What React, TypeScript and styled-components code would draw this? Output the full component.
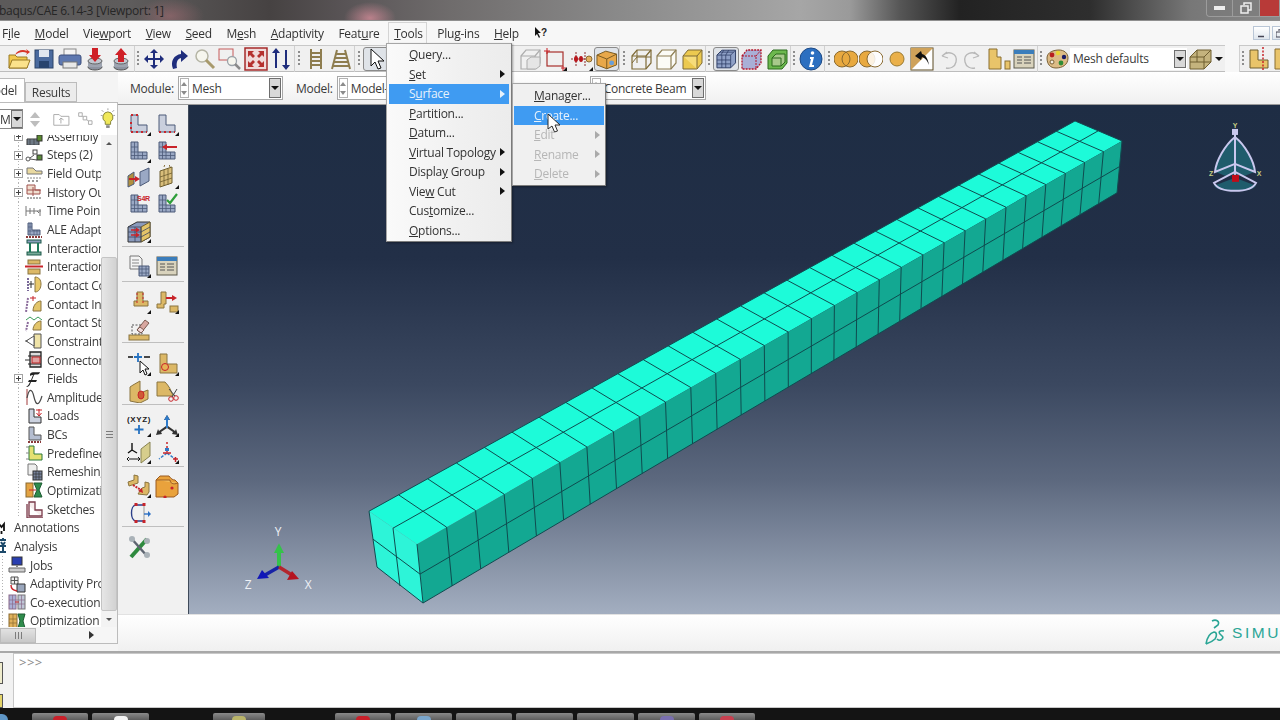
import type { ReactNode } from "react";
import styled, { createGlobalStyle } from "styled-components";

const GlobalStyle = createGlobalStyle`
  html, body {
    margin: 0;
    padding: 0;
    background: #f2f2f2;
    overflow: hidden;
  }
  * { box-sizing: border-box; }
`;

const Page = styled.div`
  position: relative;
  width: 1280px;
  height: 720px;
  display: flex;
  flex-direction: column;
  overflow: hidden;
  font-family: "Open Sans", "Noto Sans", sans-serif;
  font-size: 12px;
  letter-spacing: -0.25px;
  color: #3a3a3a;
  filter: blur(0.35px);
`;

const TitleBar = styled.div`
  height: 21px;
  flex: none;
  display: flex;
  align-items: center;
  justify-content: space-between;
  background:
    radial-gradient(26px 16px at 370px 18px, rgba(235, 150, 165, 0.65), transparent),
    radial-gradient(34px 18px at 170px 16px, rgba(200, 120, 130, 0.4), transparent),
    linear-gradient(90deg, #5c5a5a 0, #5e5c5c 130px, #464242 270px, #5a5557 350px, #6f6c6c 450px, #8a8a8a 620px, #a6a6a6 800px, #9a9a9a 850px, #565656 900px, #222 960px, #2e2e2e 1090px, #777 1190px, #8a8a8a 1280px);
  border-bottom: 1px solid #8f8f8f;
`;

const TitleText = styled.span`
  margin-left: -1px;
  color: #262626;
  white-space: nowrap;
`;

const WindowButtons = styled.div`
  display: flex;
  align-self: flex-start;
  height: 17px;
  border: 1px solid #9c9c9c;
  border-top: none;
  border-right: none;
  border-radius: 0 0 0 4px;
  overflow: hidden;
`;

const WindowButton = styled.div<{ $w: number; $bg: string }>`
  width: ${(p) => p.$w}px;
  display: flex;
  align-items: center;
  justify-content: center;
  background: ${(p) => p.$bg};
  border-right: 1px solid #9c9c9c;
`;

const MenuBar = styled.div`
  height: 24px;
  flex: none;
  display: flex;
  align-items: center;
  gap: 14.6px;
  padding-left: 2px;
  background: #f7f7f7;
`;

const MenuTitle = styled.span<{ $open?: boolean }>`
  white-space: nowrap;
  position: relative;
  color: #333;
  ${(p) =>
    p.$open &&
    `
    &::before {
      content: "";
      position: absolute;
      left: -6px;
      right: -4px;
      top: -3px;
      bottom: -5px;
      border: 1px solid #d4d4d4;
      border-bottom: none;
    }
  `}
`;

const MdiButtons = styled.div`
  margin-left: auto;
  margin-right: -9px;
  display: flex;
  gap: 2px;
`;

const MdiButton = styled.div`
  width: 17px;
  height: 14px;
  border: 1px solid #b9c6d6;
  background: linear-gradient(#fff, #dfe6ee);
  display: flex;
  align-items: center;
  justify-content: center;
`;

const ToolRow = styled.div`
  height: 27px;
  flex: none;
  display: flex;
  align-items: center;
  padding-left: 6px;
  background: #f0f0f0;
  border-top: 1px solid #c8c8c8;
  border-bottom: 1px solid #bdbdbd;
`;

const Slot = styled.div<{ $pressed?: boolean; $w?: number }>`
  width: ${(p) => p.$w ?? 25.5}px;
  height: 24px;
  flex: none;
  display: flex;
  align-items: center;
  justify-content: center;
  ${(p) =>
    p.$pressed &&
    `
    background: #dfe3e8;
    border: 1px solid #8a8a8a;
    border-radius: 3px;
  `}
`;

const Grip = styled.div<{ $w: number }>`
  width: ${(p) => p.$w}px;
  height: 26px;
  flex: none;
  display: flex;
  align-items: center;
  justify-content: center;
  border-left: 1px solid #d0d0d0;
  &::after {
    content: "";
    width: 2px;
    height: 15px;
    background: repeating-linear-gradient(#8d8d8d 0 2px, transparent 2px 4px);
  }
`;

const RowGap = styled.div<{ $w: number }>`
  width: ${(p) => p.$w}px;
  flex: none;
`;

const RowBreak = styled.div<{ $w: number }>`
  width: ${(p) => p.$w}px;
  height: 27px;
  flex: none;
  background: #f7f7f7;
`;

const PresetCombo = styled.div`
  width: 117px;
  height: 22px;
  flex: none;
  display: flex;
  align-items: center;
  justify-content: space-between;
  padding: 0 1px 0 3px;
  background: #fff;
`;

const DropButton = styled.div<{ $h?: number }>`
  width: 12px;
  height: ${(p) => p.$h ?? 18}px;
  flex: none;
  display: flex;
  align-items: center;
  justify-content: center;
  background: #d8d8d8;
  border: 1px solid #6e6e6e;
  &::after {
    content: "";
    border-left: 4px solid transparent;
    border-right: 4px solid transparent;
    border-top: 4px solid #111;
  }
`;

const Caret = styled.div`
  width: 0;
  height: 0;
  flex: none;
  margin-left: 1px;
  border-left: 4px solid transparent;
  border-right: 4px solid transparent;
  border-top: 4px solid #111;
`;

const Workspace = styled.div`
  flex: 1;
  display: flex;
  min-height: 0;
`;

const LeftPane = styled.div`
  width: 118px;
  flex: none;
  display: flex;
  flex-direction: column;
  background: #f4f4f4;
  padding-bottom: 7px;
`;

const Tabs = styled.div`
  height: 30px;
  flex: none;
  display: flex;
  align-items: flex-end;
`;

const Tab = styled.div<{ $active?: boolean }>`
  height: ${(p) => (p.$active ? 24 : 20)}px;
  width: ${(p) => (p.$active ? 25 : 52)}px;
  display: flex;
  align-items: center;
  justify-content: ${(p) => (p.$active ? "flex-end" : "center")};
  overflow: hidden;
  background: ${(p) => (p.$active ? "#fff" : "#ececec")};
  border: 1px solid #bcbcbc;
  border-left: ${(p) => (p.$active ? "none" : "1px solid #bcbcbc")};
  border-bottom: ${(p) => (p.$active ? "none" : "1px solid #bcbcbc")};
  padding-right: ${(p) => (p.$active ? 7 : 0)}px;
  white-space: nowrap;
`;

const TreePanel = styled.div`
  flex: 1;
  display: flex;
  flex-direction: column;
  min-height: 0;
  background: #fff;
  border-right: 1px solid #bcbcbc;
  border-bottom: 1px solid #bcbcbc;
`;

const TreeTools = styled.div`
  height: 33px;
  flex: none;
  display: flex;
  align-items: center;
  gap: 4px;
  background: #fff;
  border-top: 1px solid #bcbcbc;
`;

const ModelSelect = styled.div`
  width: 23px;
  height: 20px;
  flex: none;
  display: flex;
  align-items: center;
  justify-content: space-between;
  overflow: hidden;
  border: 1px solid #888;
  border-left: none;
`;

const SortArrows = styled.div`
  display: flex;
  flex-direction: column;
  gap: 3px;
  margin-left: 3px;
`;

const SortArrow = styled.div<{ $down?: boolean }>`
  border-left: 5px solid transparent;
  border-right: 5px solid transparent;
  ${(p) => (p.$down ? "border-top: 6px solid #bdbdbd;" : "border-bottom: 6px solid #bdbdbd;")}
`;

const TreeBody = styled.div`
  flex: 1;
  display: flex;
  min-height: 0;
  overflow: hidden;
`;

const TreeList = styled.div`
  flex: 1;
  min-width: 0;
  overflow: hidden;
  margin-top: -8px;
`;

const TreeRow = styled.div<{ $level: number }>`
  height: 18.65px;
  display: flex;
  align-items: center;
  position: relative;
  padding-left: ${(p) => (p.$level === 0 ? 0 : p.$level === 1 ? 8 : 25)}px;
  gap: 4px;
  white-space: nowrap;
  overflow: hidden;
`;

const TreeLine = styled.div<{ $x: number }>`
  position: absolute;
  left: ${(p) => p.$x}px;
  top: 0;
  bottom: 0;
  width: 1px;
  background: repeating-linear-gradient(#b4b4b4 0 1px, transparent 1px 3px);
`;

const Expander = styled.div`
  position: absolute;
  left: 14px;
  top: 5px;
  width: 9px;
  height: 9px;
  background: #fff;
  border: 1px solid #a3a3a3;
  &::before,
  &::after {
    content: "";
    position: absolute;
    background: #444;
  }
  &::before {
    left: 1px;
    right: 1px;
    top: 3px;
    height: 1px;
  }
  &::after {
    top: 1px;
    bottom: 1px;
    left: 3px;
    width: 1px;
  }
`;

const TreeIcon = styled.div<{ $left: number }>`
  width: 18px;
  height: 18px;
  flex: none;
  margin-left: ${(p) => p.$left}px;
  display: flex;
  align-items: center;
  justify-content: center;
`;

const VScroll = styled.div`
  width: 16px;
  flex: none;
  display: flex;
  flex-direction: column;
  background: #f3f3f3;
`;

const ScrollEnd = styled.div<{ $down?: boolean }>`
  height: 16px;
  flex: none;
  display: flex;
  align-items: center;
  justify-content: center;
  &::after {
    content: "";
    border-left: 3.5px solid transparent;
    border-right: 3.5px solid transparent;
    ${(p) => (p.$down ? "border-top: 3.5px solid #555;" : "border-bottom: 3.5px solid #555;")}
  }
`;

const ScrollTrack = styled.div`
  flex: 1;
  display: flex;
  flex-direction: column;
  padding-top: 106px;
`;

const ScrollThumb = styled.div`
  flex: 1;
  background: linear-gradient(90deg, #e6e6e6, #d2d2d2);
  border: 1px solid #c4c4c4;
  border-radius: 2px;
  display: flex;
  align-items: center;
  justify-content: center;
  &::after {
    content: "";
    width: 7px;
    height: 7px;
    background: repeating-linear-gradient(#7c7c7c 0 1px, transparent 1px 3px);
  }
`;

const HScroll = styled.div`
  height: 16px;
  flex: none;
  display: flex;
  align-items: center;
  background: #f6f6f6;
`;

const HThumb = styled.div`
  width: 36px;
  height: 15px;
  display: flex;
  align-items: center;
  justify-content: center;
  background: linear-gradient(#e2e2e2, #c8c8c8);
  border: 1px solid #bcbcbc;
  &::after {
    content: "";
    width: 7px;
    height: 7px;
    background: repeating-linear-gradient(90deg, #7c7c7c 0 1px, transparent 1px 3px);
  }
`;

const HArrow = styled.div`
  margin-left: 53px;
  border-top: 4px solid transparent;
  border-bottom: 4px solid transparent;
  border-left: 5px solid #333;
`;

const RightPane = styled.div`
  flex: 1;
  min-width: 0;
  display: flex;
  flex-direction: column;
`;

const ContextBar = styled.div`
  height: 33px;
  flex: none;
  display: flex;
  align-items: center;
  padding-left: 12px;
  background: linear-gradient(#fff, #f0f0f0);
  border-bottom: 1px solid #9a9a9a;
`;

const ContextLabel = styled.span`
  margin-right: 4px;
  white-space: nowrap;
`;

const ContextCombo = styled.div<{ $w: number; $after: number }>`
  width: ${(p) => p.$w}px;
  height: 24px;
  flex: none;
  margin-right: ${(p) => p.$after}px;
  display: flex;
  align-items: center;
  gap: 3px;
  padding: 0 1px;
  background: #fff;
  border: 1px solid #a8a8a8;
  white-space: nowrap;
`;

const Spinner = styled.div`
  width: 9px;
  height: 20px;
  flex: none;
  display: flex;
  flex-direction: column;
  justify-content: space-around;
  align-items: center;
  border: 1px solid #b3b3b3;
  &::before,
  &::after {
    content: "";
    border-left: 3px solid transparent;
    border-right: 3px solid transparent;
  }
  &::before {
    border-bottom: 4px solid #8b8b8b;
  }
  &::after {
    border-top: 4px solid #8b8b8b;
  }
`;

const ComboValue = styled.span`
  flex: 1;
`;

const MainRow = styled.div`
  flex: 1;
  display: flex;
  min-height: 0;
`;

const ToolBox = styled.div`
  width: 71px;
  flex: none;
  display: flex;
  flex-direction: column;
  padding: 6px 4px 0;
  background: #f1f1f1;
  border-right: 1px solid #3f4a5a;
`;

const ToolGroup = styled.div<{ $pad: number; $rule?: boolean; $h: number }>`
  height: ${(p) => p.$h}px;
  flex: none;
  display: grid;
  grid-template-columns: 28px 28px;
  grid-auto-rows: 26.6px;
  padding: ${(p) => p.$pad}px 0 0 3px;
  align-content: start;
  ${(p) => p.$rule && "border-bottom: 1px solid #bfbfbf;"}
`;

const ToolCell = styled.div`
  display: flex;
  align-items: center;
  justify-content: center;
`;

const Viewport = styled.div`
  flex: 1;
  min-width: 0;
  background: linear-gradient(#1e2d44 0, #222f47 30%, #3b4860 55%, #5c687e 73.5%, #a3aec0 100%);
`;

const Scene = styled.svg`
  display: block;
  width: 100%;
  height: 100%;
`;

const BrandStrip = styled.div`
  height: 37px;
  flex: none;
  display: flex;
  align-items: center;
  justify-content: flex-end;
  gap: 6px;
  background: linear-gradient(#fff, #f0f0f0);
  border-top: 1px solid #e2e2e2;
  overflow: hidden;
`;

const BrandName = styled.span`
  width: 48px;
  overflow: hidden;
  font-family: "Liberation Sans", sans-serif;
  font-size: 15.5px;
  letter-spacing: 2.6px;
  color: #2aa595;
  white-space: nowrap;
`;

const CommandRow = styled.div`
  height: 57px;
  flex: none;
  display: flex;
  background: #f2f2f2;
  border-top: 2px solid #a8a8a8;
`;

const CommandSide = styled.div`
  width: 13px;
  flex: none;
  display: flex;
  flex-direction: column;
  justify-content: space-between;
  padding-top: 9px;
`;

const SideButton = styled.div<{ $h: number; $bg: string }>`
  width: 3px;
  height: ${(p) => p.$h}px;
  background: ${(p) => p.$bg};
  border: 1px solid #555;
  border-left: none;
`;

const Console = styled.div`
  flex: 1;
  background: #fff;
  border: 1px solid #c8c8c8;
  border-right: none;
  padding: 0 0 0 5px;
  font-size: 13px;
  line-height: 17px;
  letter-spacing: 0.5px;
  color: #8a8a8a;
`;

const Taskbar = styled.div`
  height: 12px;
  flex: none;
  display: flex;
  align-items: flex-end;
  background: #141414;
`;

const TaskButton = styled.div<{ $left: number; $w: number; $mark?: string }>`
  width: ${(p) => p.$w}px;
  height: 7px;
  flex: none;
  margin-left: ${(p) => p.$left}px;
  display: flex;
  justify-content: center;
  background: linear-gradient(#8a8a8a, #5e5e5e);
  border-radius: 2px 2px 0 0;
  &::after {
    content: "";
    width: 14px;
    height: 4px;
    margin-top: 3px;
    border-radius: 7px 7px 0 0;
    background: ${(p) => p.$mark ?? "transparent"};
  }
`;

const StartOrb = styled.div`
  width: 8px;
  height: 6px;
  flex: none;
  border-radius: 0 8px 0 0;
  background: #5f96c5;
`;

const Menu = styled.div`
  position: absolute;
  left: 386px;
  top: 43px;
  width: 126px;
  padding: 1px 2px;
  background: linear-gradient(90deg, #fafafa, #f0f0f0 60%, #ececec);
  border: 1px solid #a6a6a6;
  border-right-color: #7d7d7d;
  border-bottom-color: #7d7d7d;
  box-shadow: 1px 1px 2px rgba(0, 0, 0, 0.35);
`;

const MenuRow = styled.div<{ $active?: boolean; $muted?: boolean; $pad: number }>`
  height: 19.5px;
  position: relative;
  display: flex;
  align-items: center;
  justify-content: space-between;
  padding: 0 4px 0 ${(p) => p.$pad}px;
  white-space: nowrap;
  background: ${(p) => (p.$active ? "#3f9bf2" : "transparent")};
  color: ${(p) => (p.$active ? "#e7f2fc" : p.$muted ? "#b6b6b6" : "#333")};
`;

const MenuArrow = styled.span<{ $color?: string }>`
  border-top: 4px solid transparent;
  border-bottom: 4px solid transparent;
  border-left: 5px solid ${(p) => p.$color ?? "#111"};
`;

const SubMenu = styled.div`
  position: absolute;
  left: 123px;
  top: -1px;
  width: 94px;
  padding: 2px 1px 1px;
  background: #f0f0f0;
  border: 1px solid #a6a6a6;
  border-right-color: #7d7d7d;
  border-bottom-color: #7d7d7d;
  box-shadow: 1px 1px 2px rgba(0, 0, 0, 0.35);
  z-index: 1;
`;

const Cursor = styled.svg`
  position: absolute;
  left: 547px;
  top: 113px;
  z-index: 2;
`;

type MI = { label: ReactNode; arrow?: boolean; active?: boolean; muted?: boolean };

const toolsMenu: MI[] = [
  { label: <><u>Q</u>uery...</> },
  { label: <><u>S</u>et</>, arrow: true },
  { label: <>S<u>u</u>rface</>, arrow: true, active: true },
  { label: <><u>P</u>artition...</> },
  { label: <><u>D</u>atum...</> },
  { label: <><u>V</u>irtual Topology</>, arrow: true },
  { label: <>Displa<u>y</u> Group</>, arrow: true },
  { label: <>Vie<u>w</u> Cut</>, arrow: true },
  { label: <>Cus<u>t</u>omize...</> },
  { label: <><u>O</u>ptions...</> },
];

const surfaceMenu: MI[] = [
  { label: <><u>M</u>anager...</> },
  { label: <><u>C</u>reate...</>, active: true },
  { label: <><u>E</u>dit</>, arrow: true, muted: true },
  { label: <><u>R</u>ename</>, arrow: true, muted: true },
  { label: <><u>D</u>elete</>, arrow: true, muted: true },
];

const menuTitles: ReactNode[] = [
  <>F<u>i</u>le</>,
  <><u>M</u>odel</>,
  <>Vie<u>w</u>port</>,
  <><u>V</u>iew</>,
  <><u>S</u>eed</>,
  <>M<u>e</u>sh</>,
  <><u>A</u>daptivity</>,
  <>Feat<u>u</u>re</>,
  <><u>T</u>ools</>,
  <>Plu<u>g</u>-ins</>,
  <><u>H</u>elp</>,
];

const navy = "#1f2d7c";
const tan = "#dcb866";
const tanD = "#8a7440";
const steel = "#9aa8c4";
const steelD = "#4c5a78";
const red = "#c8242a";

const Fly = () => <path d="M20 24h4v-4z" fill="#111" />;
const LShape = ({ f = steel, s = steelD }: { f?: string; s?: string }) => (
  <path d="M4 3h7v10h9v7H4z" fill={f} stroke={s} />
);
const LMesh = () => (
  <path d="M4 8h7M4 13h7M7.5 3v17M11 13v7M15.5 13v7M4 16.5h16" stroke={steelD} strokeWidth=".8" fill="none" />
);
const Block = ({ x = 7, y = 6 }: { x?: number; y?: number }) => (
  <path d={`M${x} ${y}h6v9h5v5H${x - 3}v-5h3z`} fill={tan} stroke={tanD} />
);
const Stack = () => (
  <>
    <ellipse cx="12" cy="20" rx="7" ry="3" fill="#8d93a0" stroke="#555" />
    <path d="M5 14v6h14v-6" fill="#9ea4b0" />
    <ellipse cx="12" cy="14" rx="7" ry="3" fill="#c2c7d0" stroke="#666" />
  </>
);
const WindowIcon = () => (
  <>
    <rect x="2" y="3" width="20" height="18" fill="#d9d3bd" stroke="#5d5a4c" />
    <rect x="2" y="3" width="20" height="4" fill="#3b7dbb" />
    <path d="M5 10h5M12 10h7M5 13h5M12 13h7M5 16h5M12 16h7" stroke="#555" />
  </>
);
const CubeOutline = ({ c, f = "none" }: { c: string; f?: string }) => (
  <>
    <path d="M3 9l5-6h14v13l-5 6H3z" fill={f} stroke={c} strokeWidth="1.2" />
    <path d="M3 9h14v13M17 9l5-6" fill="none" stroke={c} strokeWidth="1.2" />
  </>
);

const ICONS: Record<string, ReactNode> = {
  folder: (
    <>
      <path d="M2 21V8h6l2 2h10v11z" fill="#f1c84d" stroke="#9a7a24" />
      <path d="M2 21l3-8h18l-3 8z" fill="#fbe28b" stroke="#9a7a24" />
      <path d="M8 8c2-5 8-6 12-4l-1-2 4 3-4 3 1-2c-4-2-8-1-12 2z" fill="#d8362a" />
    </>
  ),
  save: (
    <>
      <rect x="3" y="3" width="18" height="18" fill="#4a6a9e" stroke="#2d4468" />
      <rect x="7" y="3" width="10" height="7" fill="#dfe6f0" />
      <rect x="7" y="14" width="10" height="7" fill="#28446e" />
    </>
  ),
  print: (
    <>
      <rect x="6" y="2" width="12" height="8" fill="#f4f4f4" stroke="#888" />
      <rect x="1" y="8" width="22" height="10" rx="2" fill="#5e78b0" stroke="#3c4f7c" />
      <rect x="5" y="15" width="14" height="6" fill="#e8e8e8" stroke="#777" />
    </>
  ),
  import: (
    <>
      <Stack />
      <path d="M9 1h6v7h3l-6 7-6-7h3z" fill="#cf2027" />
    </>
  ),
  export: (
    <>
      <Stack />
      <path d="M9 15h6V8h3l-6-7-6 7h3z" fill="#cf2027" />
    </>
  ),
  pan: (
    <path d="M12 2l4 4h-3v5h5V8l4 4-4 4v-3h-5v5h3l-4 4-4-4h3v-5H6v3l-4-4 4-4v3h5V6H8z" fill={navy} />
  ),
  rotate: <path d="M6 22c-3-8 1-14 8-15V3l7 6-7 6v-4c-4 1-5 5-4 10z" fill={navy} />,
  zoom: (
    <>
      <circle cx="9" cy="9" r="6" fill="#f6f6ee" stroke="#b5b5a5" strokeWidth="1.5" />
      <path d="M13 13l8 8" stroke="#a89a6c" strokeWidth="3" />
    </>
  ),
  boxzoom: (
    <>
      <rect x="1" y="2" width="14" height="11" fill="none" stroke="#c65a5a" />
      <circle cx="14" cy="14" r="4.5" fill="#f6f6ee" stroke="#9aa2a8" strokeWidth="1.3" />
      <path d="M17 17l5 5" stroke="#8a8a8a" strokeWidth="2.5" />
    </>
  ),
  autofit: (
    <>
      <rect x="1" y="1" width="22" height="22" fill="#f0dada" stroke="#a52a2a" strokeWidth="1.5" />
      <path d="M4 4h6l-2 2 3 3-2 2-3-3-2 2zM20 4v6l-2-2-3 3-2-2 3-3-2-2zM4 20v-6l2 2 3-3 2 2-3 3 2 2zM20 20h-6l2-2-3-3 2-2 3 3 2-2z" fill="#b5302e" />
    </>
  ),
  updown: (
    <>
      <path d="M8 21V6H5l4-5 4 5h-3v15z" fill={navy} transform="translate(-2)" />
      <path d="M16 3v15h-3l4 5 4-5h-3V3z" fill={navy} />
    </>
  ),
  rail: <path d="M7 2v20M17 2v20M7 6h10M7 10h10M7 14h10M7 18h10" stroke="#8e7d4f" strokeWidth="2" fill="none" />,
  railP: <path d="M8 3L3 22M16 3l5 19M7 7h10M6 11h12M5 15h14M4 19h16" stroke="#8e7d4f" strokeWidth="2" fill="none" />,
  pointer: <path d="M6 2v17l4-4 3 7 3-1-3-7h6z" fill="#fff" stroke="#111" />,
  ghostCubes: (
    <g opacity=".55">
      <CubeOutline c="#777" />
      <path d="M9 13l4-3h9v9l-4 3H9z" fill="#ddd" stroke="#777" />
    </g>
  ),
  redBox: (
    <>
      <rect x="4" y="5" width="16" height="14" fill="none" stroke="#a8302c" strokeWidth="1.2" />
      <path d="M4 1v6M1 4h6M20 19v5M18 21h5" stroke="#c81f25" />
      <Fly />
    </>
  ),
  redDots: (
    <>
      <path d="M2 12h18M7 5v15M16 5v15" stroke="#8d2a2a" strokeDasharray="2 1" />
      <ellipse cx="7" cy="12" rx="2" ry="3" fill="#b8161c" />
      <ellipse cx="12" cy="12" rx="2" ry="3" fill="#b8161c" />
      <circle cx="20" cy="12" r="3" fill="#e3b060" stroke="#8a6a30" />
      <Fly />
    </>
  ),
  orangeCube: (
    <>
      <path d="M2 8l9-4 11 3v11l-10 4-10-4z" fill="#e8a84a" stroke="#7a5a20" />
      <path d="M2 8l10 4 10-5M12 12v10" fill="none" stroke="#7a5a20" />
      <circle cx="17" cy="16" r="2.5" fill="#6a9fd8" />
    </>
  ),
  wire: (
    <>
      <CubeOutline c="#7e6a36" />
      <path d="M3 16l5-6h14M8 3v7v6" fill="none" stroke="#7e6a36" />
    </>
  ),
  hidden: <CubeOutline c="#8e7f55" f="#fbfbf6" />,
  shaded: (
    <>
      <path d="M3 9l5-6h14v13l-5 6H3z" fill="#ecc94f" stroke="#7e6a36" />
      <path d="M3 9h14v13" fill="#f6dc7a" stroke="#7e6a36" />
      <path d="M17 9l5-6" stroke="#7e6a36" />
    </>
  ),
  meshCube: (
    <>
      <path d="M3 8l5-5h14v13l-5 5H3z" fill="#8ea0c6" stroke="#2e3d66" />
      <path d="M3 8h14v13M17 8l5-5M8 8v13M12 8v13M3 13h14M3 17h14M6 5h14M10 3l-3 5M15 3l-3 5" fill="none" stroke="#2e3d66" strokeWidth=".8" />
    </>
  ),
  redCube: (
    <>
      <path d="M3 9l5-6h14v13l-5 6H3z" fill="#a9afd6" stroke="#b3152a" strokeDasharray="2 1" strokeWidth="1.3" />
      <path d="M3 9h14v13M17 9l5-6" fill="none" stroke="#b3152a" strokeDasharray="2 1" />
    </>
  ),
  greenCube: (
    <>
      <path d="M3 9l5-6h14v13l-5 6H3z" fill="#6cb84e" stroke="#2a6a1c" />
      <path d="M7 11h9v8H7zM7 11l4-4h9v8l-4 4" fill="#a8c98c" stroke="#2a6a1c" />
    </>
  ),
  info: (
    <>
      <circle cx="12" cy="12" r="11" fill="#2c6fc0" stroke="#1d4a86" />
      <circle cx="13.5" cy="6" r="1.8" fill="#fff" />
      <path d="M11 10h4l-2 8h2v2h-5l2-8h-1z" fill="#fff" />
    </>
  ),
  twoA: (
    <>
      <circle cx="8" cy="12" r="8" fill="#e8a93f" stroke="#8a6a30" />
      <circle cx="16" cy="12" r="8" fill="#e8a93f" stroke="#8a6a30" />
      <path d="M12 5.1a8 8 0 0 1 0 13.8" fill="none" stroke="#8a6a30" />
    </>
  ),
  twoB: (
    <>
      <circle cx="8" cy="12" r="8" fill="#e8a93f" stroke="#8a6a30" />
      <circle cx="16" cy="12" r="8" fill="#fff" fillOpacity=".85" stroke="#8a6a30" />
    </>
  ),
  sphere: <circle cx="12" cy="12" r="7" fill="#eab04a" stroke="#9a7a30" />,
  bias: (
    <>
      <rect x="1" y="1" width="22" height="22" fill="#fff" stroke="#5b4a22" />
      <path d="M1 23V1h22z" fill="#cfa25a" />
      <path d="M5 9l6-5 1 3c4 1 6 5 7 11-2-5-4-7-7-8l-1 3z" fill="#111" />
    </>
  ),
  undo: <path d="M6 9c6-6 16-3 14 6-1 5-6 7-10 6M6 9l5-4M6 9l6 2" fill="none" stroke="#b8b8b8" strokeWidth="1.3" />,
  redo: <path d="M18 9C12 3 2 6 4 15c1 5 6 7 10 6M18 9l-5-4M18 9l-6 2" fill="none" stroke="#b8b8b8" strokeWidth="1.3" />,
  parts: (
    <>
      <path d="M2 2h8v8h4v12H2z" fill="#e9c46a" stroke="#8a6f30" />
      <rect x="18" y="14" width="5" height="8" fill="#e9c46a" stroke="#8a6f30" />
    </>
  ),
  window: <WindowIcon />,
  palette: (
    <>
      <path d="M2 11C2 5 9 3 14 3s9 3 9 8c0 7-6 10-12 10S2 17 2 11z" fill="#dcbb86" stroke="#7a6034" />
      <circle cx="7" cy="8" r="2.4" fill="#b81e1e" />
      <circle cx="13" cy="6" r="2.2" fill="#e9d531" />
      <circle cx="19" cy="10" r="2.2" fill="#1a1a66" />
      <circle cx="16" cy="16" r="2.4" fill="#2d8c35" />
      <circle cx="7" cy="15" r="2" fill="#f4efe3" stroke="#7a6034" />
    </>
  ),
  solidCube: (
    <>
      <path d="M2 10l7-7h14v12l-7 7H2z" fill="#c4b37d" stroke="#6e5e30" />
      <path d="M2 10h14v12M16 10l7-7M9 3v12H2M9 15h14" fill="none" stroke="#6e5e30" />
    </>
  ),
  cutL: (
    <>
      <path d="M3 3h8v10h10v8H3z" fill="#e9c46a" stroke="#6e5e30" />
      <path d="M16 0v24" stroke="#c8242a" strokeDasharray="2 1.5" strokeWidth="1.5" />
    </>
  ),
  seedL: (
    <>
      <LShape f="#c9cfdd" />
      <path d="M4 3h8M4 10v10h16" stroke={red} strokeDasharray="2 3" strokeWidth="2" fill="none" />
      <Fly />
    </>
  ),
  seedE: (
    <>
      <LShape f="#c9cfdd" />
      <path d="M4 20h16" stroke={red} strokeDasharray="2 3" strokeWidth="2" />
      <Fly />
    </>
  ),
  meshL: (
    <>
      <LShape />
      <LMesh />
      <Fly />
    </>
  ),
  meshArrow: (
    <>
      <LShape />
      <LMesh />
      <path d="M8 8h14" stroke={red} strokeWidth="2" />
      <path d="M12 5l-5 3 5 3z" fill={red} />
    </>
  ),
  controls: (
    <>
      <path d="M13 7l9-4v13l-9 5z" fill={steel} stroke={steelD} />
      <path d="M1 11l6-4v12l-6 3z" fill="#b0903e" stroke={steelD} />
      <path d="M2 14h9" stroke={red} strokeWidth="2" />
      <path d="M8 11l5 3-5 3z" fill={red} />
    </>
  ),
  elemType: (
    <>
      <path d="M5 6l12-4v16L5 22z" fill="#d8bd7a" stroke="#6e5e30" />
      <path d="M9 5v16M13 4v16M5 12l12-4M5 17l12-4" stroke="#6e5e30" strokeWidth=".8" />
      <path d="M9 2a3 3 0 0 1 6 0" fill="none" stroke={tanD} />
      <Fly />
    </>
  ),
  s4r: (
    <>
      <LShape />
      <LMesh />
      <text x="10" y="9" fontSize="7" fill={red} fontFamily="Liberation Sans" fontWeight="700">S4R</text>
    </>
  ),
  check: (
    <>
      <LShape />
      <LMesh />
      <path d="M12 8l3 3 7-9" fill="none" stroke="#2e9e3a" strokeWidth="2.2" />
    </>
  ),
  partition: (
    <>
      <path d="M1 8l9-5h13v15l-9 5H1z" fill="#8a9abc" stroke="#333" />
      <path d="M14 8l9-5v15l-9 5z" fill="#e3c468" stroke="#6e5e30" />
      <path d="M1 8h13v15M1 13h13M1 18h13M8 8v15M14 13l9-5M14 18l9-5" fill="none" stroke="#3b4560" strokeWidth=".8" />
      <path d="M4 11h6M4 16h6" stroke={red} strokeWidth="1.5" />
      <path d="M9 8.5l4 2.5-4 2.5zM9 13.5l4 2.5-4 2.5z" fill={red} />
      <Fly />
    </>
  ),
  docMesh: (
    <>
      <path d="M3 2h9l3 3v10H3z" fill="#f4f4f4" stroke="#777" />
      <path d="M5 6h7M5 9h7M5 12h7" stroke="#888" />
      <path d="M12 12h10v10H12z" fill={steel} stroke={steelD} />
      <path d="M15 12v10M19 12v10M12 15h10M12 19h10" stroke={steelD} strokeWidth=".8" />
      <Fly />
    </>
  ),
  tBlockDots: (
    <>
      <Block x={10} y={2} />
      <path d="M10 3v12M16 3v12" stroke={red} strokeDasharray="2 2" />
      <Fly />
    </>
  ),
  tBlockArrow: (
    <>
      <path d="M6 2h5v12h-2v4h-7v-4h4z" fill={tan} stroke={tanD} />
      <rect x="15" y="16" width="8" height="6" fill={tan} stroke={tanD} />
      <path d="M11 8h7" stroke={red} strokeWidth="2" />
      <path d="M17 5l5 3-5 3z" fill={red} />
      <Fly />
    </>
  ),
  eraser: (
    <>
      <rect x="2" y="18" width="20" height="5" fill={tan} stroke={tanD} />
      <path d="M5 8h10v9H5z" fill="none" stroke="#555" strokeDasharray="2 1.5" />
      <path d="M10 13l8-10 4 3-8 10z" fill="#d8a7a0" stroke="#7a5a50" />
      <path d="M10 13l3-3 4 3-3 3z" fill="#f1d9d9" stroke="#7a5a50" />
    </>
  ),
  plusPointer: (
    <>
      <path d="M1 5h5M17 5h6" stroke="#111" strokeWidth="1.4" />
      <path d="M11 1v9M7 5h8" stroke="#2672c0" strokeWidth="1.8" />
      <path d="M13 9v12l3-3 2 5 2-1-2-5h4z" fill="#fff" stroke="#111" />
      <Fly />
    </>
  ),
  lCircle: (
    <>
      <path d="M5 2h7v10h10v9H5z" fill={tan} stroke={tanD} />
      <circle cx="10" cy="15" r="3.5" fill="#e7b255" stroke={red} />
      <Fly />
    </>
  ),
  lRed: (
    <>
      <path d="M6 6l7-4v12l8-3v9l-8 4-10-2V8z" fill={tan} stroke={tanD} />
      <ellipse cx="14" cy="16" rx="3" ry="4" fill="#cf5a35" stroke={red} />
    </>
  ),
  lCut: (
    <>
      <path d="M2 3h8c4 4 6 8 8 14H2z" fill={tan} stroke={tanD} />
      <circle cx="16" cy="20" r="2.3" fill="none" stroke={red} />
      <circle cx="21" cy="19" r="2.3" fill="none" stroke={red} />
      <path d="M17 18l5-8M20 17l-6-7" stroke="#444" />
    </>
  ),
  xyz: (
    <>
      <text x="12" y="9" textAnchor="middle" fontSize="8" fontWeight="700" letterSpacing=".6" fill="#222" fontFamily="Liberation Sans">(XYZ)</text>
      <path d="M12 12v9M7.5 16.5h9" stroke="#2672c0" strokeWidth="1.8" />
      <Fly />
    </>
  ),
  triadA: (
    <>
      <path d="M12 2l3 5h-2v6l7 5 1-2 2 6-6-1 1-2-6-4-6 4 1 2-6 1 2-6 1 2 7-5V7H9z" fill="#333" />
      <path d="M12 2l3 5h-2v8h-2V7H9z" fill="#2f7ac8" />
      <Fly />
    </>
  ),
  triadPlane: (
    <>
      <path d="M14 9l9-7v14l-9 7z" fill="#d6cd8c" stroke="#888354" />
      <path d="M5 3v7M5 10l5 3M5 10l-4 3" stroke="#111" strokeWidth="1.4" />
      <path d="M2 19h11M2 17l-2 2 2 2M11 17l2 2-2 2" stroke="#111" fill="none" />
      <Fly />
    </>
  ),
  triadDash: (
    <>
      <path d="M12 2v12" stroke={red} strokeDasharray="2 2" strokeWidth="1.5" />
      <path d="M10 8h4v3h-4z" fill="#2f7ac8" />
      <path d="M12 13l-8 6M12 13l8 6" stroke="#2f7ac8" strokeWidth="1.5" strokeDasharray="3 1.5" />
      <path d="M8 13h8M18 19h5M20.5 17v5" stroke={red} strokeWidth="1.5" />
      <Fly />
    </>
  ),
  pieces: (
    <>
      <path d="M1 8l6-2V1l4 1v7l-9 3z" fill={tan} stroke={tanD} />
      <path d="M15 14l3-1V8l4 1v9l-2 3-9-1z" fill={tan} stroke={tanD} />
      <path d="M6 11l8 5" stroke={red} strokeWidth="2" strokeDasharray="2 1" />
      <path d="M11 17l5 2-1-5z" fill={red} />
      <Fly />
    </>
  ),
  orangeBlock: (
    <>
      <path d="M1 6l4-4h9c2 3 4 4 6 4l3 3v11l-4 3H1z" fill="#e9a23c" stroke="#9a5a20" />
      <path d="M1 6h14c0 3 3 5 8 3" fill="#f6c76a" stroke="#9a5a20" />
      <circle cx="17" cy="14" r="1.6" fill={red} />
      <circle cx="10" cy="23" r="1.6" fill={red} />
    </>
  ),
  dCurve: (
    <>
      <path d="M9 4h8M9 20h8M9 4C3 4 3 20 9 20" fill="none" stroke="#2b3f8a" strokeWidth="1.4" />
      <path d="M17 4v16" stroke="#999" />
      <path d="M17 13h6" stroke="#2b6fc4" strokeWidth="1.4" />
      <path d="M21 10l3 3-3 3z" fill="#2b6fc4" />
      <g fill={red}>
        <rect x="7.5" y="2" width="3" height="3" />
        <rect x="15.5" y="2" width="3" height="3" />
        <rect x="7.5" y="19" width="3" height="3" />
        <rect x="15.5" y="19" width="3" height="3" />
      </g>
    </>
  ),
  spanner: (
    <>
      <path d="M4 22L20 4" stroke="#2e8a3e" strokeWidth="4" />
      <path d="M4 3l16 18" stroke="#5d6470" strokeWidth="2.5" />
      <circle cx="20" cy="6" r="3" fill="#aab2b8" />
      <circle cx="5" cy="4" r="3" fill="#aab2b8" />
      <circle cx="20" cy="20" r="3" fill="#aab2b8" />
    </>
  ),
  assembly: (
    <>
      <path d="M2 12h12v6H2z" fill="#89a" stroke="#333" />
      <path d="M2 14h12M2 16h12M5 12v6M9 12v6" stroke="#333" strokeWidth=".6" />
      <rect x="12" y="8" width="5" height="6" fill="#5a8a2e" stroke="#333" />
    </>
  ),
  steps: (
    <>
      <circle cx="3" cy="13" r="2" fill="#fff" stroke="#555" />
      <path d="M5 12l4-3M5 13l7 1" stroke="#555" />
      <rect x="8" y="4" width="4" height="4" fill="#fff" stroke="#444" />
      <rect x="12" y="9" width="5" height="5" fill="#5c8c3c" stroke="#333" />
    </>
  ),
  fieldOut: (
    <>
      <path d="M2 3h6l3 3h6v3H2z" fill="#e9d9a0" stroke="#777" />
      <path d="M2 13h14" stroke="#888" strokeDasharray="2 1" />
      <path d="M3 16h2M7 16h2M11 16h2" stroke="#333" />
    </>
  ),
  history: (
    <>
      <path d="M2 2h8v5h5v4H2z" fill="#f1dfd0" stroke="#a0524e" />
      <path d="M8 4v9M2 7h14" stroke="#a0524e" />
      <path d="M2 15h14" stroke="#555" strokeDasharray="2 1" />
    </>
  ),
  time: <path d="M1 9h15M1 4v10M5 6v6M9 6v6M15 7v7M12 9l2 2" fill="none" stroke="#777" />,
  ale: (
    <>
      <path d="M3 2h4v7h8v5H3z" fill={steel} stroke={steelD} />
      <path d="M5 2v12M3 6h4M3 10h12M9 9v5M12 9v5" stroke={steelD} strokeWidth=".7" />
      <path d="M1 16h16" stroke="#8a3a3a" strokeDasharray="2 1" strokeWidth="2" />
    </>
  ),
  inter1: (
    <>
      <rect x="2" y="1" width="14" height="3" fill="#8a9fbc" stroke="#1d5a4a" />
      <rect x="2" y="13" width="14" height="3" fill="#7a9" stroke="#1d5a4a" />
      <path d="M5 4v9M13 4v9" stroke="#1d7a5a" strokeWidth="2" />
    </>
  ),
  inter2: (
    <>
      <rect x="3" y="2" width="12" height="4" fill={tan} stroke={tanD} />
      <rect x="3" y="11" width="12" height="5" fill={tan} stroke={tanD} />
      <path d="M0 8.5h18" stroke={red} strokeWidth="2" />
    </>
  ),
  contactC: (
    <>
      <path d="M10 1c4 0 6 3 6 7s-2 8-6 8z" fill="#e9c96a" stroke={tanD} />
      <path d="M3 2v13" stroke="#7a6a9a" strokeDasharray="2 1" strokeWidth="2" />
      <path d="M4 8h5M6 5v7" stroke="#333" />
    </>
  ),
  contactI: (
    <>
      <path d="M3 3L1 17" stroke="#8a6a9a" strokeDasharray="2 1" strokeWidth="2" />
      <path d="M16 6c-4 0-8 4-8 10h8z" fill="#e3c56a" stroke={tanD} />
      <path d="M5 3h6M8 1v5" stroke={red} />
    </>
  ),
  contactS: (
    <>
      <path d="M1 6l4-3 4 3 4-3 4 3" fill="none" stroke="#3a9c5a" />
      <path d="M3 8L1 17" stroke="#8a6a9a" strokeDasharray="2 1" strokeWidth="2" />
      <path d="M16 7c-4 0-8 4-8 9h8z" fill="#e3c56a" stroke={tanD} />
    </>
  ),
  constraint: (
    <>
      <path d="M9 2h7v14H9z" fill="#efe3a8" stroke="#555" />
      <path d="M1 9l8-5v10z" fill="#fff" stroke="#555" />
      <path d="M0 9h3" stroke="#555" />
    </>
  ),
  connector: (
    <>
      <path d="M5 1h11v15H5z" fill="#ddd" stroke="#222" strokeWidth="1.3" />
      <path d="M3 5h13M3 13h13" stroke="#222" />
      <rect x="7" y="6" width="8" height="6" fill="#e0a0a0" stroke="#b22" />
      <path d="M0 9h5" stroke="#333" />
    </>
  ),
  fields: (
    <path d="M5 4c2-3 6-1 10-2l-1 2c-2 1-4 0-5 1l-2 5h5l-1 2H6c-1 3-2 5-5 5 2-1 3-3 4-5H3l1-2h2l2-5c-1 0-2 0-3 1z" fill="#222" />
  ),
  amplitude: (
    <>
      <path d="M2 1v16" stroke="#a23a3a" />
      <path d="M2 10C4 0 7 0 9 9s5 9 8-1" fill="none" stroke="#4a4a4a" strokeWidth="1.2" />
    </>
  ),
  loads: (
    <>
      <path d="M4 2h5v8h7v6H4z" fill="#ccd2e0" stroke="#333" />
      <path d="M14 2v7M11.5 6l2.5 3 2.5-3M11 3h6" stroke={red} fill="none" />
    </>
  ),
  bcs: (
    <>
      <path d="M4 1h5v8h7v5H4z" fill="#b4bdd0" stroke="#555" />
      <path d="M3 16h13" stroke="#8a3a3a" strokeDasharray="2 1" strokeWidth="2" />
    </>
  ),
  predefined: (
    <>
      <path d="M4 2h5v8h8v6H4z" fill="#e4e072" stroke="#2c7a3a" />
      <path d="M1 3h3M1 9h3M1 15h3" stroke="#888" />
    </>
  ),
  remeshing: (
    <>
      <path d="M3 1h7l2 2v9H3z" fill="#eee" stroke="#777" />
      <rect x="8" y="8" width="9" height="9" fill="#77839c" stroke="#333" />
      <path d="M11 8v9M14 8v9M8 11h9M8 14h9" stroke="#333" strokeWidth=".7" />
    </>
  ),
  optim: (
    <>
      <rect x="1" y="2" width="7" height="14" fill="#e3a342" stroke="#8a6a30" />
      <path d="M9 2h8l-3 7 3 7H9l3-7z" fill="#2f8c4c" stroke="#1c5a30" />
      <path d="M4 9h7" stroke={red} />
    </>
  ),
  sketches: <path d="M4 2h6v8h7v6H4zM2 4v14h16" fill="#f6ecec" stroke="#7a3a4a" strokeWidth="1.3" />,
  jobs: (
    <>
      <rect x="4" y="1" width="10" height="8" fill="#2a3fb0" stroke="#333" />
      <path d="M8 9h2v2H8z" fill="#888" />
      <path d="M1 12h16v4H1z" fill="#ccc" stroke="#666" />
    </>
  ),
  adaptive: (
    <>
      <path d="M3 2h7v7H3z" fill="#eee" stroke="#555" />
      <path d="M6.5 2v7M3 5.5h7" stroke="#555" />
      <path d="M9 9h8v8H9z" fill="#9aa6bc" stroke="#333" />
      <path d="M3 10c0 4 2 5 6 6" fill="none" stroke={red} strokeWidth="1.4" />
    </>
  ),
  coexec: (
    <>
      <rect x="1" y="2" width="7" height="14" fill="#a9afd6" stroke="#8a6a8a" />
      <rect x="10" y="2" width="7" height="14" fill="#bfc6d6" stroke="#777" />
      <path d="M1 7h16M1 11h16M4.5 2v14M13.5 2v14" stroke="#8a6a8a" strokeWidth=".7" />
      <path d="M7 9h4" stroke={red} />
    </>
  ),
  optim2: (
    <>
      <rect x="1" y="2" width="8" height="14" fill="#e0b15a" stroke="#8a6a30" />
      <path d="M1 7h8M1 11h8M5 2v14" stroke="#8a6a30" strokeWidth=".7" />
      <path d="M10 2h7l-2 7 2 7h-7l2-7z" fill="#2f8c4c" stroke="#1c5a30" />
    </>
  ),
  annotations: <path d="M5 5h2l2.5 3 2.5-3v7M9.500 12v3" fill="none" stroke="#111" strokeWidth="1.8" />,
  analysis: (
    <path d="M7 3h7M7 9h7M7 15h7M11 1v3M9 5l2 3 2-3M11 10v4" fill="none" stroke="#1d4a6a" strokeWidth="2" />
  ),
};

const Ico = ({ name, size = 24 }: { name: string; size?: number }) => (
  <svg width={size} height={size} viewBox={size === 18 ? "0 0 18 18" : "0 0 24 24"}>
    {ICONS[name]}
  </svg>
);

type Tree = { label: string; icon: string; level: number; expand?: boolean };

const treeItems: Tree[] = [
  { label: "Assembly", icon: "assembly", level: 2, expand: true },
  { label: "Steps (2)", icon: "steps", level: 2, expand: true },
  { label: "Field Outp", icon: "fieldOut", level: 2, expand: true },
  { label: "History Ou", icon: "history", level: 2, expand: true },
  { label: "Time Poin", icon: "time", level: 2 },
  { label: "ALE Adapt", icon: "ale", level: 2 },
  { label: "Interaction", icon: "inter1", level: 2 },
  { label: "Interaction", icon: "inter2", level: 2 },
  { label: "Contact Co", icon: "contactC", level: 2 },
  { label: "Contact In", icon: "contactI", level: 2 },
  { label: "Contact St", icon: "contactS", level: 2 },
  { label: "Constraint", icon: "constraint", level: 2 },
  { label: "Connector", icon: "connector", level: 2 },
  { label: "Fields", icon: "fields", level: 2, expand: true },
  { label: "Amplitude", icon: "amplitude", level: 2 },
  { label: "Loads", icon: "loads", level: 2 },
  { label: "BCs", icon: "bcs", level: 2 },
  { label: "Predefined", icon: "predefined", level: 2 },
  { label: "Remeshing", icon: "remeshing", level: 2 },
  { label: "Optimizati", icon: "optim", level: 2 },
  { label: "Sketches", icon: "sketches", level: 2 },
  { label: "Annotations", icon: "annotations", level: 0 },
  { label: "Analysis", icon: "analysis", level: 0 },
  { label: "Jobs", icon: "jobs", level: 1 },
  { label: "Adaptivity Pro", icon: "adaptive", level: 1 },
  { label: "Co-execution", icon: "coexec", level: 1 },
  { label: "Optimization", icon: "optim2", level: 1 },
];

const toolGroups: { h: number; pad: number; rule: boolean; cells: string[] }[] = [
  { h: 136, pad: 0, rule: true, cells: ["seedL", "seedE", "meshL", "meshArrow", "controls", "elemType", "s4r", "check", "partition"] },
  { h: 35, pad: 6, rule: true, cells: ["docMesh", "window"] },
  { h: 61, pad: 7, rule: true, cells: ["tBlockDots", "tBlockArrow", "eraser"] },
  { h: 62, pad: 8, rule: true, cells: ["plusPointer", "lCircle", "lRed", "lCut"] },
  { h: 62, pad: 7, rule: true, cells: ["xyz", "triadA", "triadPlane", "triadDash"] },
  { h: 60, pad: 6, rule: true, cells: ["pieces", "orangeBlock", "dCurve"] },
  { h: 40, pad: 7, rule: false, cells: ["spanner"] },
];

type Pt = [number, number];
const N = 30;
const W = 1.27;
const mix = (a: Pt, b: Pt, t: number): Pt => [a[0] + (b[0] - a[0]) * t, a[1] + (b[1] - a[1]) * t];
const along = (a: Pt, b: Pt, i: number): Pt => {
  const s = i / N;
  return mix(a, b, (W * s) / (1 - s + W * s));
};
const poly = (pts: Pt[]) => pts.map((p) => p.join(",")).join(" ");
const seg = (a: Pt, b: Pt) => `M${a[0].toFixed(1)} ${a[1].toFixed(1)}L${b[0].toFixed(1)} ${b[1].toFixed(1)}`;

const A: Pt = [369, 512];
const AM: Pt = [393, 529];
const B: Pt = [417, 545];
const D: Pt = [1075, 121];
const DM: Pt = [1098, 131];
const C: Pt = [1122, 141];
const B2: Pt = [420, 575];
const C2: Pt = [1119, 167];
const B3: Pt = [423, 604];
const C3: Pt = [1117, 193];
const A2: Pt = [373, 540];
const A3: Pt = [377, 568];
const M3: Pt = [400, 587];

const beamLines = (() => {
  const d: string[] = [];
  for (let i = 1; i < N; i++) {
    d.push(seg(along(A, D, i), along(B, C, i)));
    d.push(seg(along(B, C, i), along(B3, C3, i)));
  }
  d.push(seg(AM, DM), seg(B2, C2), seg(A2, B2), seg(AM, M3), seg(B, B3));
  return d.join("");
})();

const Beam = () => (
  <>
    <polygon points={poly([A, D, C, B])} fill="#1dfbd9" />
    <polygon points={poly([B, C, C3, B3])} fill="#13a892" />
    <polygon points={poly([A, B, B3, A3])} fill="#2df4d8" />
    <polygon points={poly([A, D, C, C3, B3, A3])} fill="none" stroke="#114a50" strokeWidth="1" />
    <path d={beamLines} fill="none" stroke="#0f4a4e" strokeWidth="1" />
  </>
);

const TriadLeft = () => (
  <>
    <path d="M279 568v-18" stroke="#35c24a" strokeWidth="4" />
    <path d="M279 544l5 10h-10z" fill="#35c24a" />
    <path d="M279 568l-14 8" stroke="#1722a6" strokeWidth="3.5" />
    <path d="M257 580l5-9 7 8z" fill="#1016b8" />
    <path d="M279 568l13 8" stroke="#b3262e" strokeWidth="3.5" />
    <path d="M299 580l-12 1 5-9z" fill="#b5141f" />
    <g fontFamily="Open Sans" fontSize="12" fill="#eef1f6" textAnchor="middle">
      <text x="278" y="537">Y</text>
      <text x="248" y="590">Z</text>
      <text x="308" y="590">X</text>
    </g>
  </>
);

const TriadRight = () => (
  <>
    <path d="M1235 175l0-38c-10 9-19 24-20 35l10 4z" fill="#1f5c6c" />
    <path d="M1235 175l0-38c10 9 19 24 20 35l-10 4z" fill="#1f5c6c" />
    <path d="M1235 178l-21 8c4 5 12 5 21 5s17 0 21-5z" fill="#1f5c6c" />
    <g fill="none" stroke="#c9c8ee" strokeWidth="2">
      <path d="M1235 132v46" />
      <path d="M1235 137c-10 8-19 24-20 35l20-8M1235 137c10 8 19 24 20 35l-20-8" />
      <path d="M1235 172l-21 11c3 6 12 8 21 8s18-2 21-8l-21-11" />
    </g>
    <rect x="1232" y="129" width="6" height="6" fill="#c9c8ee" />
    <rect x="1232" y="175" width="7" height="7" fill="#c00c18" />
    <g fontFamily="Liberation Sans" fontSize="7" fontWeight="700" fill="#c8cf84" textAnchor="middle">
      <text x="1235" y="128">Y</text>
      <text x="1211" y="176">Z</text>
      <text x="1259" y="176">X</text>
    </g>
  </>
);

const Toolbar = () => (
  <ToolRow>
    <Slot><Ico name="folder" /></Slot>
    <Slot><Ico name="save" /></Slot>
    <Slot><Ico name="print" /></Slot>
    <Slot><Ico name="import" /></Slot>
    <Slot><Ico name="export" /></Slot>
    <Grip $w={7.5} />
    <Slot><Ico name="pan" /></Slot>
    <Slot><Ico name="rotate" /></Slot>
    <Slot><Ico name="zoom" /></Slot>
    <Slot><Ico name="boxzoom" /></Slot>
    <Slot><Ico name="autofit" /></Slot>
    <Slot><Ico name="updown" /></Slot>
    <Grip $w={9} />
    <Slot><Ico name="rail" /></Slot>
    <Slot><Ico name="railP" /></Slot>
    <Grip $w={9} />
    <Slot $pressed $w={27}><Ico name="pointer" /></Slot>
    <RowGap $w={127} />
    <Slot><Ico name="ghostCubes" /></Slot>
    <Slot><Ico name="redBox" /></Slot>
    <Slot><Ico name="redDots" /></Slot>
    <Slot $pressed><Ico name="orangeCube" /></Slot>
    <Grip $w={9} />
    <Slot><Ico name="wire" /></Slot>
    <Slot><Ico name="hidden" /></Slot>
    <Slot><Ico name="shaded" /></Slot>
    <Grip $w={8.5} />
    <Slot $pressed><Ico name="meshCube" /></Slot>
    <Slot><Ico name="redCube" /></Slot>
    <Slot><Ico name="greenCube" /></Slot>
    <Grip $w={8.5} />
    <Slot><Ico name="info" /></Slot>
    <Grip $w={9.5} />
    <Slot><Ico name="twoA" /></Slot>
    <Slot><Ico name="twoB" /></Slot>
    <Slot><Ico name="sphere" /></Slot>
    <Slot><Ico name="bias" /></Slot>
    <Slot><Ico name="undo" /></Slot>
    <Slot><Ico name="redo" /></Slot>
    <Slot><Ico name="parts" /></Slot>
    <Slot><Ico name="window" /></Slot>
    <Grip $w={7.5} />
    <Slot><Ico name="palette" /></Slot>
    <PresetCombo>
      Mesh defaults
      <DropButton />
    </PresetCombo>
    <Slot><Ico name="solidCube" /></Slot>
    <Slot $w={12}><Caret /></Slot>
    <RowBreak $w={14} />
    <Grip $w={8} />
    <Slot><Ico name="cutL" /></Slot>
    <Slot><Ico name="parts" /></Slot>
  </ToolRow>
);

const ModelTree = () => (
  <TreePanel>
    <TreeTools>
      <ModelSelect>
        M
        <DropButton $h={18} />
      </ModelSelect>
      <SortArrows>
        <SortArrow />
        <SortArrow $down />
      </SortArrows>
      <RowGap $w={4} />
      <svg width="22" height="20" viewBox="0 0 22 20" fill="none" stroke="#a5a5a5">
        <path d="M2 5h6l2 2h9v10H2zM10 15V9M8 11l2-2 3 2" />
      </svg>
      <svg width="22" height="20" viewBox="0 0 22 20" fill="none" stroke="#a5a5a5">
        <path d="M3 3h4v4H3zM8 7h4v4H8zM14 12h4v4h-4zM7 7l1 1M12 11l2 1" />
      </svg>
      <svg width="20" height="24" viewBox="0 0 20 24">
        <path d="M10 4a6 6 0 0 0-3 11v3h6v-3a6 6 0 0 0-3-11z" fill="#f0e85a" stroke="#7a7a30" />
        <path d="M8 19h4v3H8z" fill="#888" />
        <path d="M10 0v2M2 8h2M16 8h2M3 2l2 2M17 2l-2 2" stroke="#999" />
      </svg>
    </TreeTools>
    <TreeBody>
      <TreeList>
        {treeItems.map((t) => (
          <TreeRow key={t.icon} $level={t.level}>
            {t.level === 2 && <TreeLine $x={18} />}
            {t.level === 1 && <TreeLine $x={2} />}
            {t.expand && <Expander />}
            <TreeIcon $left={t.level === 0 ? -8 : 0}>
              <Ico name={t.icon} size={18} />
            </TreeIcon>
            {t.label}
          </TreeRow>
        ))}
      </TreeList>
      <VScroll>
        <ScrollEnd />
        <ScrollTrack>
          <ScrollThumb />
        </ScrollTrack>
        <ScrollEnd $down />
      </VScroll>
    </TreeBody>
    <HScroll>
      <HThumb />
      <HArrow />
    </HScroll>
  </TreePanel>
);

const DropMenu = ({ items, pad }: { items: MI[]; pad: number }) => (
  <>
    {items.map((m, i) => (
      <MenuRow key={i} $active={m.active} $muted={m.muted} $pad={pad}>
        <span>{m.label}</span>
        {m.arrow && <MenuArrow $color={m.muted ? "#aaa" : m.active ? "#e7f2fc" : "#111"} />}
      </MenuRow>
    ))}
  </>
);

function App() {
  return (
    <>
      <GlobalStyle />
      <Page>
        <TitleBar>
          <TitleText>baqus/CAE 6.14-3 [Viewport: 1]</TitleText>
          <WindowButtons>
            <WindowButton $w={26} $bg="rgba(120,120,120,.5)">
              <svg width="11" height="4"><rect width="11" height="4" fill="#eee" /></svg>
            </WindowButton>
            <WindowButton $w={27} $bg="rgba(120,120,120,.5)">
              <svg width="12" height="12" fill="none" stroke="#eee" strokeWidth="1.5">
                <path d="M4 3V1h7v7H8M1 4h7v7H1z" />
              </svg>
            </WindowButton>
            <WindowButton $w={20} $bg="#b83a38" />
          </WindowButtons>
        </TitleBar>
        <MenuBar>
          {menuTitles.map((m, i) => (
            <MenuTitle key={i} $open={i === 8}>{m}</MenuTitle>
          ))}
          <svg width="13" height="14" viewBox="0 0 13 14">
            <path d="M1 1v9l2-2 2 4 1-1-2-4h3z" fill="#111" />
            <text x="7" y="10" fontSize="10" fontWeight="700" fill="#222" fontFamily="Liberation Sans">?</text>
          </svg>
          <MdiButtons>
            <MdiButton>
              <svg width="9" height="9"><path d="M1 7.5h6" stroke="#445" strokeWidth="1.5" /></svg>
            </MdiButton>
            <MdiButton>
              <svg width="9" height="9" fill="none" stroke="#445"><path d="M3 2V0h6v5H7M0 3h6v5H0z" /></svg>
            </MdiButton>
          </MdiButtons>
        </MenuBar>
        <Toolbar />
        <Workspace>
          <LeftPane>
            <Tabs>
              <Tab $active>Model</Tab>
              <Tab>Results</Tab>
            </Tabs>
            <ModelTree />
          </LeftPane>
          <RightPane>
            <ContextBar>
              <ContextLabel>Module:</ContextLabel>
              <ContextCombo $w={105} $after={13}>
                <Spinner />
                <ComboValue>Mesh</ComboValue>
                <DropButton $h={20} />
              </ContextCombo>
              <ContextLabel>Model:</ContextLabel>
              <ContextCombo $w={120} $after={133}>
                <Spinner />
                <ComboValue>Model-1</ComboValue>
              </ContextCombo>
              <ContextCombo $w={116} $after={0}>
                <Spinner />
                <ComboValue>Concrete Beam</ComboValue>
                <DropButton $h={20} />
              </ContextCombo>
            </ContextBar>
            <MainRow>
              <ToolBox>
                {toolGroups.map((g, i) => (
                  <ToolGroup key={i} $h={g.h} $pad={g.pad} $rule={g.rule}>
                    {g.cells.map((c) => (
                      <ToolCell key={c}>
                        <Ico name={c} />
                      </ToolCell>
                    ))}
                  </ToolGroup>
                ))}
              </ToolBox>
              <Viewport>
                <Scene viewBox="189 105 1091 510" preserveAspectRatio="none">
                  <Beam />
                  <TriadLeft />
                  <TriadRight />
                </Scene>
              </Viewport>
            </MainRow>
            <BrandStrip>
              <svg width="22" height="28" viewBox="0 0 22 28" fill="none" stroke="#2aa595" strokeWidth="1.6">
                <path d="M8 2c4-2 8 0 6 4l-4 3M2 25c1-6 4-11 8-12 3 0 3 4 1 7-2 2-6 4-9 5M20 12c-4-1-6 1-4 3s4 3 2 5-4 1-5 0" />
              </svg>
              <BrandName>SIMU</BrandName>
            </BrandStrip>
          </RightPane>
        </Workspace>
        <CommandRow>
          <CommandSide>
            <SideButton $h={22} $bg="#efeccd" />
            <SideButton $h={14} $bg="#e4d46a" />
          </CommandSide>
          <Console>&gt;&gt;&gt;</Console>
        </CommandRow>
        <Taskbar>
          <StartOrb />
          <TaskButton $left={24} $w={56} $mark="#c9202a" />
          <TaskButton $left={4} $w={57} $mark="#f4f4f4" />
          <TaskButton $left={64} $w={52} $mark="#b9b46a" />
          <TaskButton $left={70} $w={56} $mark="#c9202a" />
          <TaskButton $left={4} $w={57} $mark="#7aa6cc" />
          <TaskButton $left={4} $w={56} />
          <TaskButton $left={4} $w={57} />
          <TaskButton $left={4} $w={57} />
          <TaskButton $left={4} $w={57} $mark="#7a6fb0" />
          <TaskButton $left={4} $w={56} $mark="#c94050" />
        </Taskbar>
        <Menu>
          {toolsMenu.map((m, i) => (
            <MenuRow key={i} $active={m.active} $pad={20}>
              <span>{m.label}</span>
              {m.arrow && <MenuArrow $color={m.active ? "#e7f2fc" : "#111"} />}
              {m.active && (
                <SubMenu>
                  <DropMenu items={surfaceMenu} pad={20} />
                </SubMenu>
              )}
            </MenuRow>
          ))}
        </Menu>
        <Cursor width="14" height="20" viewBox="0 0 14 20">
          <path d="M1 1v15l4-3 2.5 6 3-1-2.5-6h5z" fill="#fff" stroke="#2a2a2a" />
        </Cursor>
      </Page>
    </>
  );
}

export default App;
